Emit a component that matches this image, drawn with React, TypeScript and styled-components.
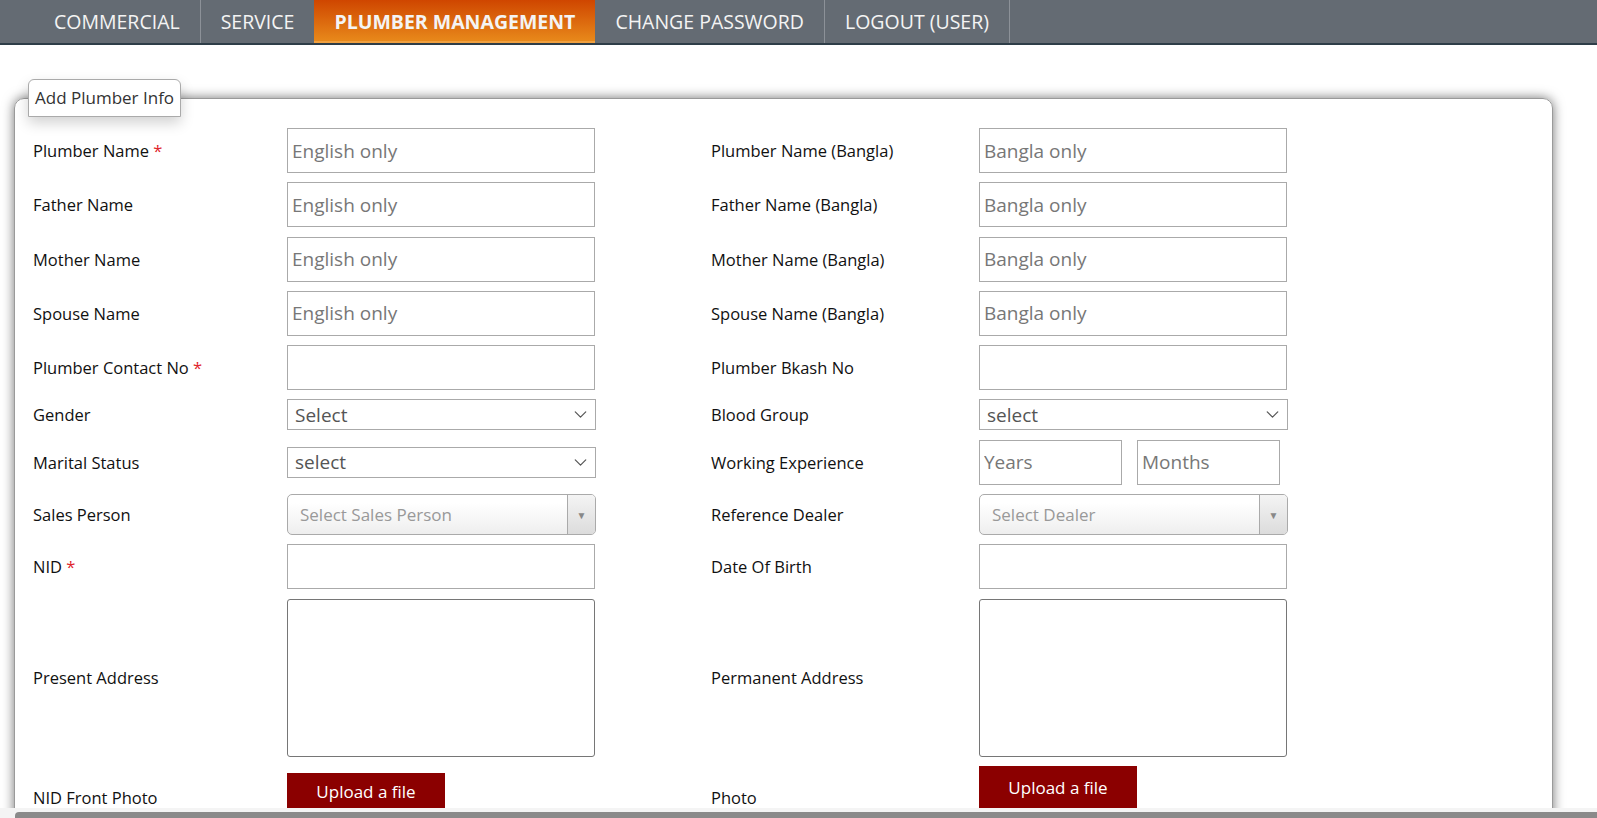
import React from 'react'
import styled, { createGlobalStyle } from 'styled-components'
import { ChevronDown } from 'lucide-react'

const GlobalStyle = createGlobalStyle`
    html, body {
        margin: 0;
        padding: 0;
        overflow: hidden;
        background: #fff;
        font-family: "Open Sans", "Noto Sans", sans-serif;
    }
    * { box-sizing: border-box; }
`

const NavBar = styled.nav`
    display: flex;
    height: 45px;
    padding-left: 34px;
    background: #646b73;
    border-bottom: 2px solid #2e3d48;
`

const NavItem = styled.a<{ $active?: boolean }>`
    display: flex;
    align-items: center;
    padding: 0 20px;
    height: 43px;
    font-size: 19.5px;
    color: #f4f4f4;
    text-decoration: none;
    border-right: 1px solid #8c9198;
    font-weight: ${p => (p.$active ? 700 : 400)};
    background: ${p => (p.$active ? 'linear-gradient(#cf4600, #e98c1c)' : 'transparent')};
    ${p => p.$active && 'border-right: none; margin-left: -1px; box-shadow: inset 0 -2px 0 #f0a040;'}
`

const Content = styled.main`
    padding: 34px 44px 0 14px;
`

const Panel = styled.fieldset`
    margin: 0;
    padding: 10px 0 20px 18px;
    border: 1px solid #9a9a9a;
    border-radius: 10px;
    box-shadow: 0 0 12px rgba(0, 0, 0, 0.55);
    min-height: 760px;
`

const Legend = styled.legend`
    margin-left: -5px;
    padding: 6px 6px 7px;
    font-size: 17px;
    color: #333;
    background: #fff;
    border: 1px solid #aaa;
    border-radius: 6px 6px 0 0;
    box-shadow: 0 6px 14px rgba(0, 0, 0, 0.18);
`

const FormGrid = styled.div`
    display: grid;
    grid-template-columns: 254px 424px 268px 308px;
    row-gap: 9.3px;
    align-items: center;
    margin-top: 1px;
`

const Label = styled.label`
    font-size: 16.5px;
    color: #111;
`

const Required = styled.span`
    color: #e0242c;
`

const TextBox = styled.input<{ $w?: number }>`
    width: ${p => p.$w ?? 308}px;
    height: 45px;
    border: 1px solid #aaa;
    padding: 0 4px;
    font-family: inherit;
    font-size: 19px;
    color: #333;
    outline: none;
    &::placeholder { color: #777; }
`

const PairBox = styled.div`
    display: flex;
    gap: 15px;
`

const SelectBox = styled.div`
    display: flex;
    align-items: center;
    justify-content: space-between;
    width: 309px;
    height: 31px;
    padding: 0 4px 0 7px;
    border: 1px solid #aaa;
    font-size: 19px;
    color: #555;
`

const ChosenBox = styled.div`
    display: flex;
    align-items: stretch;
    width: 309px;
    height: 41px;
    border: 1px solid #aaa;
    border-radius: 5px;
    background: linear-gradient(#ffffff 20%, #eeeeee);
    overflow: hidden;
`

const ChosenText = styled.span`
    flex: 1;
    display: flex;
    align-items: center;
    padding-left: 12px;
    font-size: 17px;
    color: #999;
`

const ChosenArrow = styled.span`
    display: flex;
    align-items: center;
    justify-content: center;
    width: 28px;
    border-left: 1px solid #aaa;
    background: linear-gradient(#f4f4f4, #dcdcdc);
    color: #888;
    font-size: 10px;
`

const TextArea = styled.textarea`
    width: 308px;
    height: 158px;
    border: 1px solid #767676;
    border-radius: 3px;
    resize: none;
    outline: none;
`

const UploadButton = styled.button<{ $offset?: number }>`
    width: 158px;
    height: ${p => (p.$offset ? 38 : 43)}px;
    margin-top: ${p => p.$offset ?? 0}px;
    align-self: start;
    border: none;
    background: #8b0000;
    color: #fff;
    font-family: inherit;
    font-size: 17px;
`

const PhotoLabel = styled(Label)`
    align-self: start;
    margin-top: 20px;
`

const ScrollTrack = styled.div`
    position: fixed;
    left: 0;
    right: 0;
    bottom: 0;
    height: 10px;
    padding: 4px 0 0 15px;
    background: #f4f4f4;
`

const ScrollThumb = styled.div`
    height: 100%;
    background: #8a8a8a;
    border-radius: 4px 0 0 0;
`

const Select = ({ text }: { text: string }) => (
    <SelectBox>
        <span>{text}</span>
        <ChevronDown size={21} strokeWidth={1.4} color="#555" />
    </SelectBox>
)

const Chosen = ({ text }: { text: string }) => (
    <ChosenBox>
        <ChosenText>{text}</ChosenText>
        <ChosenArrow>▼</ChosenArrow>
    </ChosenBox>
)

const nameRows = [
    ['Plumber Name', true],
    ['Father Name', false],
    ['Mother Name', false],
    ['Spouse Name', false],
] as const

const App = () => {
    return (
        <>
            <GlobalStyle />
            <NavBar>
                <NavItem>COMMERCIAL</NavItem>
                <NavItem>SERVICE</NavItem>
                <NavItem $active>PLUMBER MANAGEMENT</NavItem>
                <NavItem>CHANGE PASSWORD</NavItem>
                <NavItem>LOGOUT (USER)</NavItem>
            </NavBar>
            <Content>
                <Panel>
                    <Legend>Add Plumber Info</Legend>
                    <FormGrid>
                        {nameRows.map(([name, req]) => (
                            <React.Fragment key={name}>
                                <Label>{name} {req && <Required>*</Required>}</Label>
                                <TextBox placeholder="English only" />
                                <Label>{name} (Bangla)</Label>
                                <TextBox placeholder="Bangla only" />
                            </React.Fragment>
                        ))}

                        <Label>Plumber Contact No <Required>*</Required></Label>
                        <TextBox />
                        <Label>Plumber Bkash No</Label>
                        <TextBox />

                        <Label>Gender</Label>
                        <Select text="Select" />
                        <Label>Blood Group</Label>
                        <Select text="select" />

                        <Label>Marital Status</Label>
                        <Select text="select" />
                        <Label>Working Experience</Label>
                        <PairBox>
                            <TextBox $w={143} placeholder="Years" />
                            <TextBox $w={143} placeholder="Months" />
                        </PairBox>

                        <Label>Sales Person</Label>
                        <Chosen text="Select Sales Person" />
                        <Label>Reference Dealer</Label>
                        <Chosen text="Select Dealer" />

                        <Label>NID <Required>*</Required></Label>
                        <TextBox />
                        <Label>Date Of Birth</Label>
                        <TextBox />

                        <Label>Present Address</Label>
                        <TextArea />
                        <Label>Permanent Address</Label>
                        <TextArea />

                        <PhotoLabel>NID Front Photo</PhotoLabel>
                        <UploadButton $offset={7}>Upload a file</UploadButton>
                        <PhotoLabel>Photo</PhotoLabel>
                        <UploadButton>Upload a file</UploadButton>
                    </FormGrid>
                </Panel>
            </Content>
            <ScrollTrack>
                <ScrollThumb />
            </ScrollTrack>
        </>
    )
}

export default App
